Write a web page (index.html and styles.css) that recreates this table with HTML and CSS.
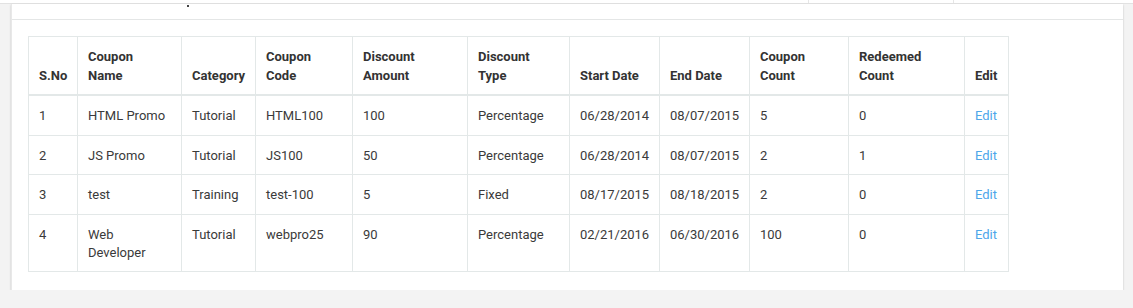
FILE: index.html
```html
<!DOCTYPE html>
<html lang="en">
<head>
<meta charset="utf-8">
<title>Coupons</title>
<link rel="stylesheet" href="styles.css">
</head>
<body>
<div class="topbar">
  <div class="topbar-main"></div>
  <div class="topbar-item"></div>
  <div class="topbar-item topbar-last"></div>
</div>
<main class="main">
  <section class="card">
    <div class="card-head"><span class="title-tail"></span></div>
    <div class="card-body">
      <table class="coupons">
        <colgroup>
          <col class="c-sno"><col class="c-name"><col class="c-cat"><col class="c-code"><col class="c-amt"><col class="c-type"><col class="c-start"><col class="c-end"><col class="c-count"><col class="c-red"><col class="c-edit">
        </colgroup>
        <thead>
          <tr>
            <th>S.No</th>
            <th>Coupon<br>Name</th>
            <th>Category</th>
            <th>Coupon Code</th>
            <th>Discount Amount</th>
            <th>Discount Type</th>
            <th>Start Date</th>
            <th>End Date</th>
            <th>Coupon Count</th>
            <th>Redeemed Count</th>
            <th>Edit</th>
          </tr>
        </thead>
        <tbody>
          <tr>
            <td>1</td><td>HTML Promo</td><td>Tutorial</td><td>HTML100</td><td>100</td><td>Percentage</td><td>06/28/2014</td><td>08/07/2015</td><td>5</td><td>0</td><td><a href="#" class="edit">Edit</a></td>
          </tr>
          <tr>
            <td>2</td><td>JS Promo</td><td>Tutorial</td><td>JS100</td><td>50</td><td>Percentage</td><td>06/28/2014</td><td>08/07/2015</td><td>2</td><td>1</td><td><a href="#" class="edit">Edit</a></td>
          </tr>
          <tr>
            <td>3</td><td>test</td><td>Training</td><td>test-100</td><td>5</td><td>Fixed</td><td>08/17/2015</td><td>08/18/2015</td><td>2</td><td>0</td><td><a href="#" class="edit">Edit</a></td>
          </tr>
          <tr>
            <td>4</td><td>Web Developer</td><td>Tutorial</td><td>webpro25</td><td>90</td><td>Percentage</td><td>02/21/2016</td><td>06/30/2016</td><td>100</td><td>0</td><td><a href="#" class="edit">Edit</a></td>
          </tr>
        </tbody>
      </table>
    </div>
  </section>
</main>
</body>
</html>
```
FILE: styles.css
```css
html, body {
  margin: 0;
  padding: 0;
}
body {
  background: #f3f3f3;
  font-family: Roboto, "Liberation Sans", Arial, sans-serif;
  font-size: 13px;
  color: #333;
}
.topbar {
  display: flex;
  height: 3px;
  background: #fff;
  border-bottom: 1px solid #e2e2e2;
}
.topbar-main {
  width: 808px;
}
.topbar-item {
  width: 144px;
  border-left: 1px solid #e6e6e6;
}
.topbar-last {
  flex: 1;
}
.main {
  margin: 0 10px 0 11px;
}
.card {
  background: #fff;
  border-left: 1px solid #e8e8e8;
  box-shadow: 0 1px 2px rgba(0, 0, 0, 0.2);
}
.card-head {
  height: 15px;
  border-bottom: 1px solid #e4e6e6;
  display: flex;
}
.title-tail {
  display: block;
  width: 2px;
  height: 2px;
  margin: 1px 0 0 175px;
  background: #444;
}
.card-body {
  padding: 16px 16px 18px;
}
.coupons {
  border-collapse: collapse;
  table-layout: fixed;
  width: 981px;
  border: 1px solid #e3e8e8;
}
.coupons th,
.coupons td {
  border: 1px solid #e3e8e8;
  padding: 11px 10px 9px;
  line-height: 18.57px;
  text-align: left;
  vertical-align: top;
}
.coupons th {
  vertical-align: bottom;
  font-weight: 700;
  color: #333;
  border-bottom: 2px solid #e3e8e8;
  padding: 11px 10px 9px;
}
.coupons td {
  color: #3a3a3a;
}
.coupons tbody tr:last-child td {
  padding-bottom: 8px;
}
.c-sno { width: 49px; }
.c-name { width: 104px; }
.c-cat { width: 74px; }
.c-code { width: 97px; }
.c-amt { width: 115px; }
.c-type { width: 102px; }
.c-start { width: 90px; }
.c-end { width: 90px; }
.c-count { width: 99px; }
.c-red { width: 116px; }
.c-edit { width: 44px; }
.edit {
  color: #4ea6ea;
  text-decoration: none;
}
```
